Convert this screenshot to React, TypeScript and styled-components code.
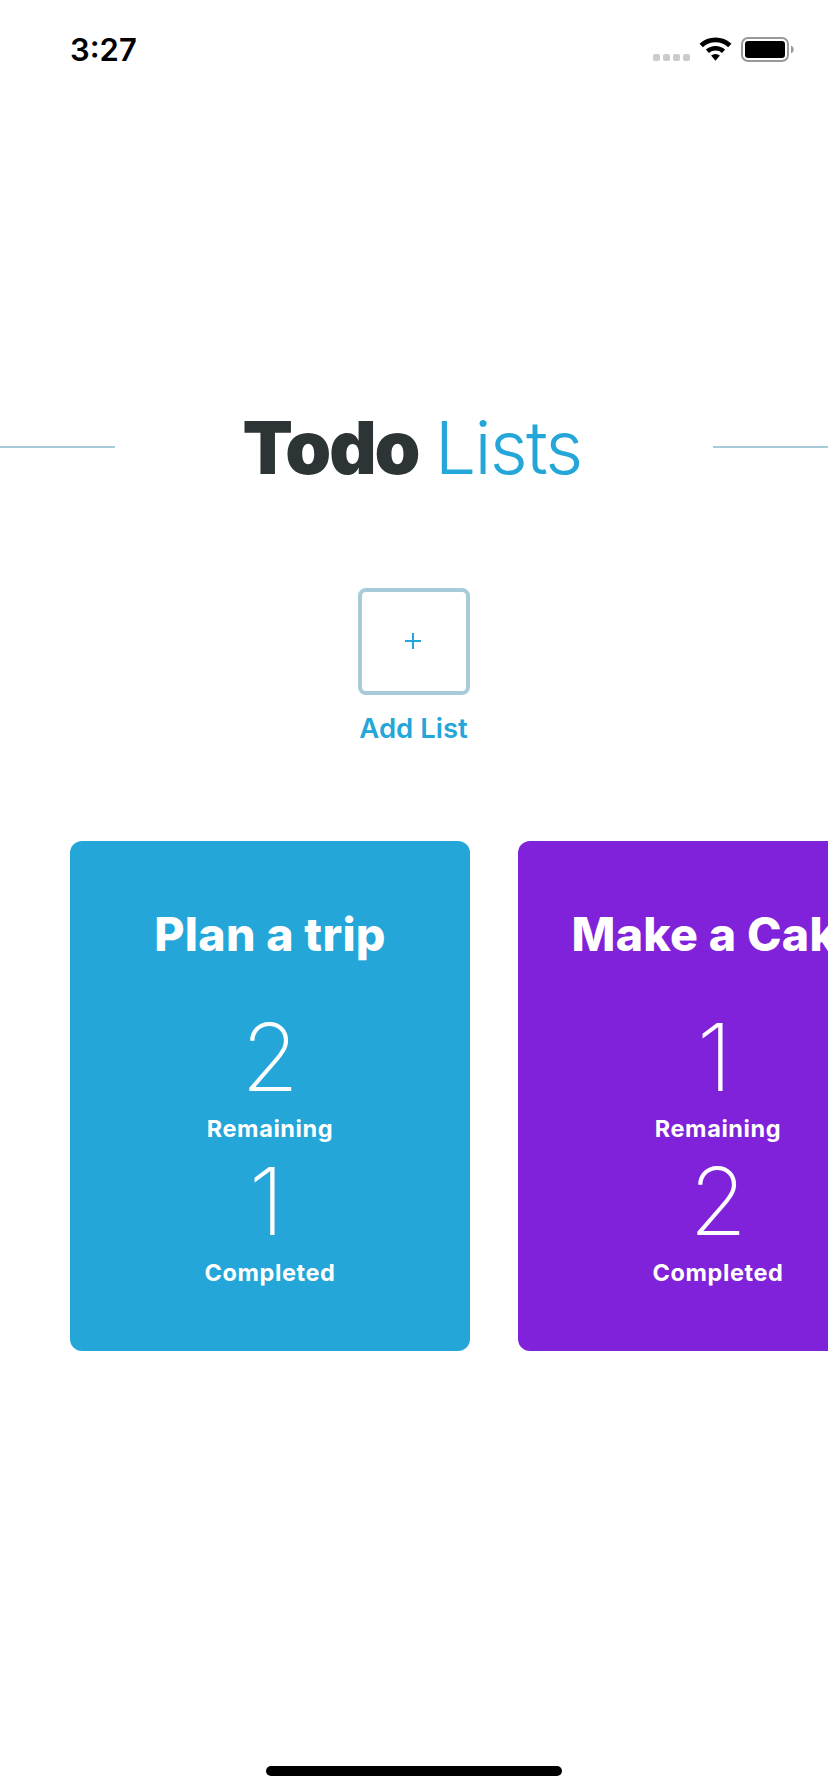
import React from "react";
import styled, { createGlobalStyle } from "styled-components";

const palette = {
  blue: "#24A6D9",
  lightBlue: "#A7CBD9",
  purple: "#8022D9",
  ink: "#2D3436",
};

const GlobalStyle = createGlobalStyle`
  * { box-sizing: border-box; }
  body {
    margin: 0;
    background: #fff;
    font-family: Inter, "Liberation Sans", sans-serif;
    overflow: hidden;
  }
`;

const Screen = styled.div`
  display: flex;
  flex-direction: column;
  width: 828px;
  height: 1792px;
  overflow: hidden;
  background: #fff;
`;

const StatusBar = styled.header`
  display: flex;
  justify-content: space-between;
  align-items: center;
  height: 100px;
  padding: 0 33px 0 70px;
`;

const Clock = styled.time`
  font-size: 31px;
  font-weight: 600;
  line-height: 40px;
  color: #000;
`;

const TitleRow = styled.div`
  display: flex;
  align-items: center;
  justify-content: space-between;
  height: 96px;
  margin-top: 299px;
`;

const Divider = styled.div`
  width: 115px;
  height: 2px;
  background: ${palette.lightBlue};
`;

const Title = styled.h1`
  margin: 0;
  padding: 2px 4px 0 0;
  font-size: 73.5px;
  line-height: 94px;
  font-weight: 880;
  letter-spacing: -2px;
  white-space: nowrap;
  color: ${palette.ink};
`;

const TitleAccent = styled.span`
  margin-left: 3.6px;
  font-weight: 300;
  letter-spacing: -1.8px;
  color: ${palette.blue};
`;

const AddSection = styled.section`
  display: flex;
  flex-direction: column;
  align-items: center;
  margin-top: 93px;
`;

const AddButton = styled.button`
  display: flex;
  align-items: center;
  justify-content: center;
  width: 112px;
  height: 107px;
  padding: 0 2px 1px 0;
  border: 4px solid ${palette.lightBlue};
  border-radius: 8px;
  background: none;
`;

const AddLabel = styled.div`
  margin-top: 16px;
  padding-right: 1px;
  font-size: 27.5px;
  line-height: 34px;
  font-weight: 600;
  color: ${palette.blue};
`;

const CardList = styled.main`
  display: flex;
  gap: 48px;
  margin-top: 96px;
  padding-left: 70px;
`;

const Card = styled.article<{ $color: string }>`
  display: flex;
  flex-direction: column;
  align-items: center;
  flex: none;
  width: 400px;
  height: 510px;
  padding-top: 64px;
  border-radius: 12px;
  background: ${(p) => p.$color};
  color: #fff;
`;

const CardTitle = styled.h2`
  margin: 0 0 37px;
  font-size: 46.5px;
  line-height: 58px;
  font-weight: 800;
  letter-spacing: 0.3px;
  white-space: nowrap;
`;

const Stat = styled.div`
  display: flex;
  flex-direction: column;
  align-items: center;
  height: 144px;
`;

const Count = styled.div<{ $narrow: boolean }>`
  padding-right: ${(p) => (p.$narrow ? "7px" : "0")};
  font-size: 93.5px;
  line-height: 115px;
  font-weight: 200;
`;

const StatLabel = styled.div`
  margin-top: -1px;
  font-size: 23.5px;
  line-height: 29px;
  font-weight: 700;
  letter-spacing: 0.6px;
`;

const HomeIndicator = styled.div`
  width: 296px;
  height: 10px;
  margin: auto auto 16px;
  border-radius: 5px;
  background: #000;
`;

const StatusIcons = () => (
  <svg width="142" height="26" viewBox="0 0 142 26" fill="none">
    {[0, 10, 20, 30].map((x) => (
      <rect key={x} x={x} y="17" width="7" height="7" rx="2" fill="#cbcbcb" />
    ))}
    <path d="M48.200 8.600A20.700 20.700 0 0 1 76.800 8.600" stroke="#000" strokeWidth="4.800" />
    <path d="M54.400 14.200A12.400 12.400 0 0 1 70.600 14.200" stroke="#000" strokeWidth="4.600" />
    <path d="M62.500 23.800L58.100 18.500A6.800 6.800 0 0 1 66.900 18.500Z" fill="#000" />
    <rect x="89" y="1" width="46" height="23" rx="6" stroke="#999" strokeWidth="2" />
    <rect x="92" y="4" width="40" height="17" rx="3.200" fill="#000" />
    <path d="M138 8.500a4.300 4.300 0 0 1 0 8z" fill="#999" />
  </svg>
);

const PlusIcon = () => (
  <svg width="16" height="16" viewBox="0 0 16 16" stroke={palette.blue} strokeWidth="2">
    <path d="M8 0v16M0 8h16" />
  </svg>
);

const lists = [
  { name: "Plan a trip", color: palette.blue, remaining: 2, completed: 1 },
  { name: "Make a Cake", color: palette.purple, remaining: 1, completed: 2 },
];

export default function App() {
  return (
    <Screen>
      <GlobalStyle />
      <StatusBar>
        <Clock>3:27</Clock>
        <StatusIcons />
      </StatusBar>
      <TitleRow>
        <Divider />
        <Title>
          Todo <TitleAccent>Lists</TitleAccent>
        </Title>
        <Divider />
      </TitleRow>
      <AddSection>
        <AddButton aria-label="Add List">
          <PlusIcon />
        </AddButton>
        <AddLabel>Add List</AddLabel>
      </AddSection>
      <CardList>
        {lists.map((list) => (
          <Card key={list.name} $color={list.color}>
            <CardTitle>{list.name}</CardTitle>
            <Stat>
              <Count $narrow={list.remaining === 1}>{list.remaining}</Count>
              <StatLabel>Remaining</StatLabel>
            </Stat>
            <Stat>
              <Count $narrow={list.completed === 1}>{list.completed}</Count>
              <StatLabel>Completed</StatLabel>
            </Stat>
          </Card>
        ))}
      </CardList>
      <HomeIndicator />
    </Screen>
  );
}
